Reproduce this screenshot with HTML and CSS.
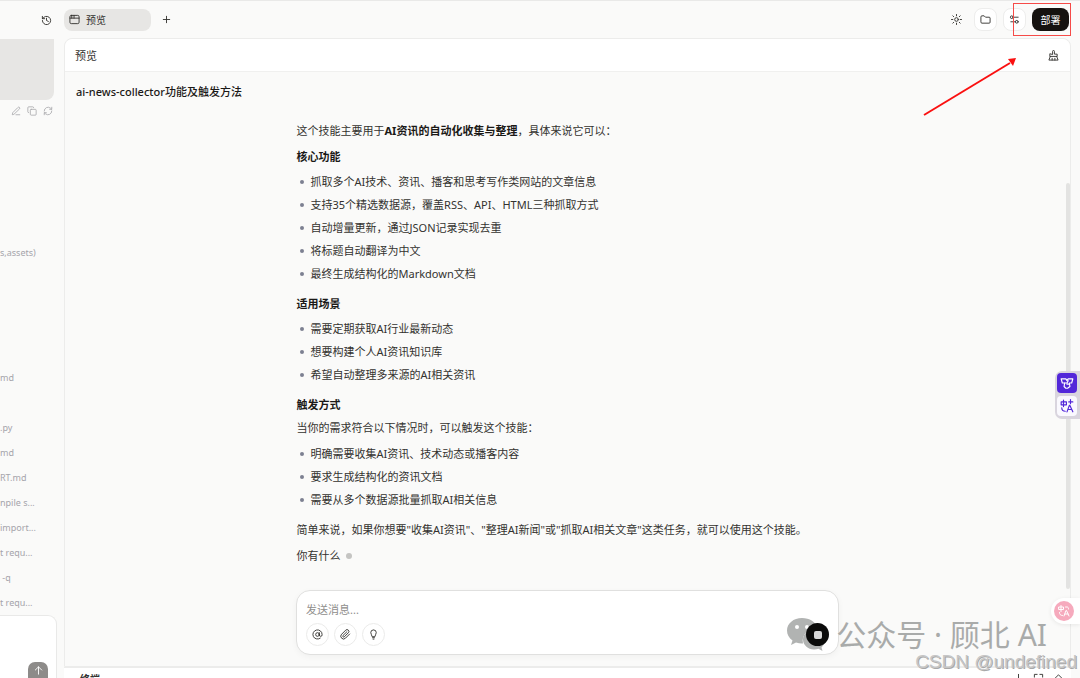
FILE: index.html
```html
<!DOCTYPE html>
<html lang="zh-CN">
  <head>
    <meta charset="UTF-8" />
    <meta name="viewport" content="width=device-width, initial-scale=1.0" />
    <title>预览</title>
    <link rel="stylesheet" href="styles.css">
  </head>
  <body>
    <aside class="sidebar">
      <div class="sidebar-top">
        <button class="icon-btn" aria-label="历史记录">
          <svg class="icon" viewBox="0 0 24 24"><path d="M3 12a9 9 0 1 0 3-6.700L3 8"/><path d="M3 3v5h5"/><path d="M12 7v5l4 2"/></svg>
        </button>
      </div>
      <div class="user-message"></div>
      <div class="message-actions">
        <button class="icon-btn" aria-label="编辑">
          <svg class="icon" viewBox="0 0 24 24"><path d="M12 21h9"/><path d="M16.500 3.500a2 2 0 0 1 4 3.500L7 20l-4 1 1-4z"/></svg>
        </button>
        <button class="icon-btn" aria-label="复制">
          <svg class="icon" viewBox="0 0 24 24"><rect x="8" y="8" width="14" height="14" rx="2"/><path d="M4 16a2 2 0 0 1-2-2V4a2 2 0 0 1 2-2h10a2 2 0 0 1 2 2"/></svg>
        </button>
        <button class="icon-btn" aria-label="重试">
          <svg class="icon" viewBox="0 0 24 24"><path d="M3 12a9 9 0 0 1 15-6.700L21 8"/><path d="M21 3v5h-5"/><path d="M21 12a9 9 0 0 1-15 6.700L3 16"/><path d="M3 21v-5h5"/></svg>
        </button>
      </div>
      <div class="log">
        <p class="log-first">s,assets)</p>
        <p class="log-file">md</p>
        <ul>
          <li>.py</li>
          <li>md</li>
          <li>RT.md</li>
          <li>npile s...</li>
          <li>import...</li>
          <li>t requ...</li>
          <li>&nbsp;-q</li>
          <li>t requ...</li>
        </ul>
      </div>
      <div class="sidebar-input">
        <button class="up-btn" aria-label="发送">
          <svg class="icon" viewBox="0 0 24 24"><path d="M12 20V4"/><path d="M5 11l7-7 7 7"/></svg>
        </button>
      </div>
    </aside>

    <main class="main">
      <header class="toolbar">
        <button class="tab">
          <svg class="icon" viewBox="0 0 24 24"><rect x="2" y="3" width="20" height="18" rx="3"/><path d="M2 9h20M6 3v6M11 3v6"/></svg>
          预览
        </button>
        <button class="icon-btn add-btn" aria-label="新建">
          <svg class="icon" viewBox="0 0 24 24"><path d="M5 12h14M12 5v14"/></svg>
        </button>
        <div class="toolbar-right">
          <button class="icon-btn sun-btn" aria-label="主题">
            <svg class="icon" viewBox="0 0 24 24"><circle cx="12" cy="12" r="4"/><path d="M12 1v3M12 20v3M1 12h3M20 12h3M4 4l2 2M18 18l2 2M4 20l2-2M18 6l2-2"/></svg>
          </button>
          <button class="square-btn" aria-label="文件">
            <svg class="icon" viewBox="0 0 24 24"><path d="M2 6a2 2 0 0 1 2-2h5l3 3h8a2 2 0 0 1 2 2v9a2 2 0 0 1-2 2H4a2 2 0 0 1-2-2z"/></svg>
          </button>
          <button class="square-btn" aria-label="设置">
            <svg class="icon" viewBox="0 0 24 24"><path d="M9 7h11M4 17h10"/><circle cx="6" cy="7" r="3"/><circle cx="17" cy="17" r="3"/></svg>
          </button>
          <button class="deploy-btn">部署</button>
        </div>
      </header>

      <section class="preview">
        <div class="preview-head">
          <h1>预览</h1>
          <button class="icon-btn" aria-label="清除">
            <svg class="icon" viewBox="0 0 24 24"><path d="M10 9V3a2 2 0 0 1 4 0v6h6v5H4V9z"/><path d="M5 14l-3 8h20l-3-8M9 22v-4M15 22v-4"/></svg>
          </button>
        </div>
        <h2 class="chat-title">ai-news-collector功能及触发方法</h2>
        <div class="answer">
          <p>这个技能主要用于<strong>AI资讯的自动化收集与整理</strong>，具体来说它可以：</p>
          <h3>核心功能</h3>
          <ul>
            <li>抓取多个AI技术、资讯、播客和思考写作类网站的文章信息</li>
            <li>支持35个精选数据源，覆盖RSS、API、HTML三种抓取方式</li>
            <li>自动增量更新，通过JSON记录实现去重</li>
            <li>将标题自动翻译为中文</li>
            <li>最终生成结构化的Markdown文档</li>
          </ul>
          <h3>适用场景</h3>
          <ul>
            <li>需要定期获取AI行业最新动态</li>
            <li>想要构建个人AI资讯知识库</li>
            <li>希望自动整理多来源的AI相关资讯</li>
          </ul>
          <h3>触发方式</h3>
          <p>当你的需求符合以下情况时，可以触发这个技能：</p>
          <ul>
            <li>明确需要收集AI资讯、技术动态或播客内容</li>
            <li>要求生成结构化的资讯文档</li>
            <li>需要从多个数据源批量抓取AI相关信息</li>
          </ul>
          <p>简单来说，如果你想要"收集AI资讯"、"整理AI新闻"或"抓取AI相关文章"这类任务，就可以使用这个技能。</p>
          <p class="pending">你有什么<span class="typing"></span></p>
        </div>
        <form class="composer">
          <input type="text" aria-label="发送消息" placeholder="发送消息...">
          <div class="composer-row">
            <button type="button" class="round-btn" aria-label="提及">
              <svg class="icon" viewBox="0 0 24 24"><circle cx="12" cy="12" r="4"/><path d="M16 8v5a3 3 0 0 0 6 0v-1a10 10 0 1 0-4 8"/></svg>
            </button>
            <button type="button" class="round-btn" aria-label="附件">
              <svg class="icon" viewBox="0 0 24 24"><path d="M21 11l-9 9a6 6 0 0 1-8.500-8.500l9-9a4 4 0 0 1 5.700 5.700l-9 9a2 2 0 0 1-2.800-2.800L15 6"/></svg>
            </button>
            <button type="button" class="round-btn" aria-label="提示">
              <svg class="icon" viewBox="0 0 24 24"><path d="M9 16c0-3-3-4-3-8a6 6 0 0 1 12 0c0 4-3 5-3 8zM10 19h4M11 22h2"/></svg>
            </button>
            <button type="button" class="stop-btn" aria-label="停止"><span></span></button>
          </div>
        </form>
        <div class="scroll-thumb"></div>
      </section>

      <section class="terminal">
        <h2>终端</h2>
        <div class="terminal-tools">
          <svg class="icon" viewBox="0 0 24 24"><path d="M12 3v18M6 15l6 6 6-6"/></svg>
          <svg class="icon" viewBox="0 0 24 24"><path d="M3 9V3h6M15 3h6v6M21 15v6h-6M9 21H3v-6"/></svg>
          <svg class="icon" viewBox="0 0 24 24"><path d="M4 12l8-8 8 8"/></svg>
        </div>
      </section>
    </main>

    <div class="translate-dock">
      <button class="dock-btn purple" aria-label="助手">
        <svg class="icon" viewBox="0 0 24 24"><path d="M2 5h8l2 3 2-3h8l-2 7h-4l1 6-4 3h-3l-3-3 1-6H4z"/><path d="M8 12h4l2-4M12 14h3"/></svg>
      </button>
      <button class="dock-btn" aria-label="翻译">
        <svg class="icon" viewBox="0 0 24 24"><path d="M2 5h9v5H2zM6 2v11M3 15c0 4 2 6 6 6M12 22l4-11h1l5 11M14 18h6M18 1v7M15 5h7"/></svg>
      </button>
    </div>
    <div class="translate-pill">
      <button aria-label="翻译网页">
        <svg class="icon" viewBox="0 0 24 24"><path d="M2 4h9v5H2zM6 1v12M3 15c0 4 2 6 6 6M12 22l4-11h1l5 11M14 18h6M15 4h3c2 0 3 1 3 4"/></svg>
      </button>
    </div>

    <div class="mark-box"></div>
    <svg class="mark-arrow" viewBox="0 0 96 60">
      <path d="M2 58L88 6" fill="none" stroke="#fa1010" stroke-width="2"/>
      <path d="M94 1L86 2L91 9Z" fill="#fa1010"/>
    </svg>

    <div class="watermark">
      <svg viewBox="0 0 38 34">
        <path d="M15 0C6.500 0 0 5.500 0 12.500c0 4 2 7.500 5.500 10L4 27l5-2.500c2 .6 4 .9 6 .9h1c-2-9 6-15.500 14.500-15C29 4 22.500 0 15 0z"/>
        <path d="M38 21.500c0-5.500-5-10-11-10s-11 4.500-11 10 5 10 11 10c1.500 0 3-.2 4.500-.7l4 2.200-1-3.500c2-2 3.500-5 3.500-8z"/>
        <g fill="#fff"><circle cx="10" cy="9" r="2"/><circle cx="20" cy="9" r="2"/><circle cx="23" cy="18" r="1.500"/><circle cx="31" cy="18" r="1.500"/></g>
      </svg>
      <span>公众号 · 顾北 AI</span>
    </div>
    <div class="csdn">CSDN @undefined</div>
  </body>
</html>
```
FILE: styles.css
```css
* {
  box-sizing: border-box;
}

body {
  display: flex;
  height: 100vh;
  margin: 0;
  overflow: hidden;
  border-top: 1px solid #e9e9e8;
  background-color: #fafaf9;
  color: #33322f;
  font-family: "Noto Sans", "Noto Sans CJK SC", sans-serif;
  font-size: 11px;
}

h1,
h2,
h3,
p,
ul {
  margin: 0;
  padding: 0;
}

button {
  display: flex;
  align-items: center;
  justify-content: center;
  padding: 0;
  border: none;
  background: none;
  color: inherit;
  font: inherit;
  cursor: pointer;
}

.icon {
  width: 11px;
  height: 11px;
  flex: none;
  fill: none;
  stroke: currentColor;
  stroke-width: 2;
  stroke-linecap: round;
  stroke-linejoin: round;
}

/* Left sidebar */
.sidebar {
  display: flex;
  flex-direction: column;
  flex: 0 0 64px;
  overflow: hidden;
}

.sidebar-top {
  display: flex;
  align-items: center;
  justify-content: flex-end;
  height: 39px;
  padding-right: 12px;
}

.user-message {
  height: 62px;
  margin-right: 10px;
  border-radius: 0 0 8px 0;
  background-color: #e7e6e4;
}

.message-actions {
  display: flex;
  justify-content: flex-end;
  gap: 6px;
  padding: 6px 11px 0 0;
  color: #aaa9ad;
}

.message-actions .icon {
  width: 10px;
  height: 10px;
}

.log {
  flex: 1;
  color: #a5a4ab;
  font-size: 9px;
  line-height: 25px;
  white-space: nowrap;
}

.log-first {
  margin-top: 124px;
}

.log-file {
  margin: 100px 0 25px;
}

.log ul {
  list-style: none;
}

.sidebar-input {
  display: flex;
  align-items: flex-end;
  justify-content: flex-end;
  height: 64px;
  margin-right: 7px;
  padding-right: 8px;
  overflow: hidden;
  border: 1px solid #e9e9e8;
  border-width: 1px 1px 0 0;
  border-radius: 0 9px 0 0;
  background-color: #fff;
}

.up-btn {
  width: 20px;
  height: 16px;
  padding-top: 2px;
  border-radius: 7px 7px 0 0;
  background-color: #8d8b89;
  color: #fff;
}

/* Top toolbar */
.main {
  display: flex;
  flex: 1;
  flex-direction: column;
  min-width: 0;
  margin-right: 9px;
}

.toolbar {
  display: flex;
  align-items: center;
  height: 37px;
}

.tab {
  justify-content: flex-start;
  gap: 6px;
  width: 87px;
  height: 22px;
  padding-left: 5px;
  border-radius: 8px;
  background-color: #e7e6e4;
  font-size: 10px;
}

.add-btn {
  margin-left: 10px;
}

.toolbar-right {
  display: flex;
  align-items: center;
  gap: 6px;
  margin-left: auto;
  padding-right: 2px;
}

.sun-btn {
  margin-right: 6px;
}

.square-btn {
  width: 23px;
  height: 23px;
  border: 1px solid #ededec;
  border-radius: 8px;
  background-color: #fff;
}

.deploy-btn {
  width: 37px;
  height: 23px;
  border-radius: 8px;
  background-color: #15120f;
  color: #fff;
  font-size: 10px;
}

/* Preview panel */
.preview {
  position: relative;
  display: flex;
  flex: 1;
  flex-direction: column;
  min-height: 0;
  border: 1px solid #ececeb;
  border-radius: 8px 8px 0 0;
}

.preview-head {
  display: flex;
  align-items: center;
  justify-content: space-between;
  height: 33px;
  padding: 0 11px 0 10px;
  border-bottom: 1px solid #f0f0ef;
  border-radius: 8px 8px 0 0;
  background-color: #fff;
}

.preview-head h1 {
  font-size: 11px;
  font-weight: 400;
}

.chat-title {
  padding: 0 11px;
  color: #1b1917;
  font-size: 11px;
  font-weight: 500;
  line-height: 40px;
}

.answer {
  flex: 1;
  width: 100%;
  max-width: 542px;
  min-height: 0;
  margin: 7px auto 0;
  line-height: 23px;
}

.answer p {
  margin-bottom: 3px;
}

.answer h3 {
  color: #1b1917;
  font-size: 11px;
  font-weight: 700;
}

.answer strong {
  color: #1b1917;
}

.answer ul {
  margin: 2px 0 7px;
  padding-left: 14px;
  list-style: none;
}

.answer li::before {
  content: "";
  float: left;
  width: 4px;
  height: 4px;
  margin: 10px 0 0 -11px;
  border-radius: 50%;
  background-color: #7c8092;
}

.pending {
  display: flex;
  align-items: center;
  gap: 5px;
}

.typing {
  width: 6px;
  height: 6px;
  border-radius: 50%;
  background-color: #c4c4c2;
}

.composer {
  width: 100%;
  max-width: 543px;
  margin: 0 auto 11px;
  padding: 8px 9px;
  border: 1px solid #e0e0df;
  border-radius: 14px;
  background-color: #fff;
  box-shadow: 0 2px 6px rgba(0, 0, 0, 0.04);
}

.composer input {
  display: block;
  width: 100%;
  height: 20px;
  padding: 0;
  border: none;
  outline: none;
  background: none;
  font: inherit;
}

.composer input::placeholder {
  color: #8f8e8c;
}

.composer-row {
  display: flex;
  gap: 5px;
  margin-top: 4px;
}

.round-btn {
  width: 23px;
  height: 23px;
  border: 1px solid #ebebea;
  border-radius: 50%;
}

.stop-btn {
  position: relative;
  z-index: 3;
  width: 23px;
  height: 23px;
  margin-left: auto;
  border-radius: 50%;
  background-color: #0b0b0a;
}

.stop-btn span {
  width: 8px;
  height: 8px;
  border-radius: 2px;
  background-color: #d8d8d8;
}

.scroll-thumb {
  position: absolute;
  top: 144px;
  right: 0;
  bottom: 77px;
  width: 4px;
  border-radius: 2px;
  background-color: #e3e3e2;
}

/* Terminal strip */
.terminal {
  display: flex;
  align-items: flex-start;
  justify-content: space-between;
  height: 11px;
  padding: 5px 7px 0 16px;
  overflow: hidden;
  border-top: 1px solid #ececeb;
  background-color: #fff;
}

.terminal h2 {
  font-size: 10px;
  line-height: 12px;
}

.terminal-tools {
  display: flex;
  gap: 9px;
}

/* Floating translate buttons */
.translate-dock {
  position: absolute;
  top: 371px;
  right: 0;
  display: flex;
  flex-direction: column;
  gap: 3px;
  padding: 2px 3px 3px 2px;
  border-radius: 7px 0 0 7px;
  background-color: #d9d5de;
}

.dock-btn {
  width: 20px;
  height: 20px;
  border-radius: 4px;
  background-color: #faf9fe;
  color: #5227d9;
}

.dock-btn .icon {
  width: 14px;
  height: 14px;
}

.dock-btn.purple {
  background-color: #5227d9;
  color: #fff;
}

.translate-pill {
  position: absolute;
  top: 598px;
  right: 0;
  padding: 3px 6px 3px 3px;
  border-radius: 13px 0 0 13px;
  background-color: #fff;
  box-shadow: 0 1px 4px rgba(0, 0, 0, 0.08);
}

.translate-pill button {
  width: 20px;
  height: 20px;
  border-radius: 50%;
  background-color: #f6aabd;
  color: #fff;
}

.translate-pill .icon {
  width: 12px;
  height: 12px;
}

/* Annotations over the page */
.mark-box {
  position: absolute;
  top: 3px;
  right: 9px;
  width: 58px;
  height: 33px;
  border: 1px solid #f64b48;
  pointer-events: none;
}

.mark-arrow {
  position: absolute;
  top: 57px;
  right: 62px;
  width: 96px;
  height: 60px;
  pointer-events: none;
}

.watermark {
  position: absolute;
  right: 33px;
  bottom: 26px;
  z-index: 2;
  display: flex;
  align-items: center;
  gap: 11px;
  color: #a9abaa;
  font-family: "Noto Sans", "Noto Sans CJK SC", sans-serif;
  font-size: 30px;
  line-height: 34px;
  white-space: nowrap;
  pointer-events: none;
}

.watermark svg {
  width: 38px;
  height: 34px;
  fill: #b1b3b2;
}

.csdn {
  position: absolute;
  right: 3px;
  bottom: 6px;
  z-index: 2;
  color: #c6c6c6;
  font-family: "Liberation Sans", sans-serif;
  font-size: 19px;
  line-height: 20px;
  text-shadow: 1px 1px 0 #a8a8a8;
  pointer-events: none;
}
```
